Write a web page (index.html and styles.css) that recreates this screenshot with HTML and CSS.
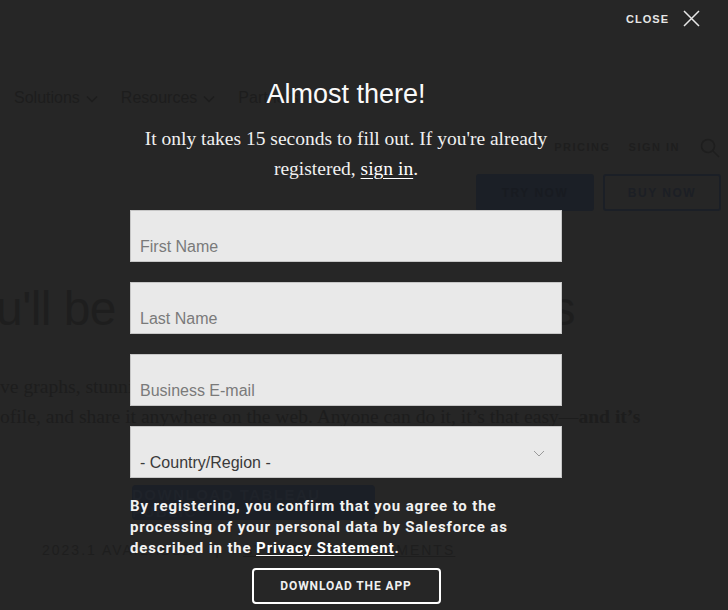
FILE: index.html
```html
<!DOCTYPE html>
<html lang="en">
<head>
<meta charset="utf-8">
<title>Almost there!</title>
<link rel="stylesheet" href="styles.css">
</head>
<body>
<div class="page">
  <header class="top">
    <nav class="mainnav">
      <span class="navitem">Solutions <svg class="caret" width="12" height="8" viewBox="0 0 12 8"><path d="M1 1.5l5 5 5-5" fill="none" stroke="currentColor" stroke-width="1.4"/></svg></span>
      <span class="navitem">Resources <svg class="caret" width="12" height="8" viewBox="0 0 12 8"><path d="M1 1.5l5 5 5-5" fill="none" stroke="currentColor" stroke-width="1.4"/></svg></span>
      <span class="navitem">Partners</span>
    </nav>
    <div class="util">
      <span>PRICING</span>
      <span>SIGN IN</span>
      <svg class="search" width="20" height="20" viewBox="0 0 20 20"><circle cx="8" cy="8" r="6.5" fill="none" stroke="currentColor" stroke-width="1.6"/><path d="M13 13l6 6" stroke="currentColor" stroke-width="1.6"/></svg>
    </div>
    <div class="ctas">
      <span class="try">TRY NOW</span>
      <span class="buy">BUY NOW</span>
    </div>
  </header>
  <section class="hero">
    <h1 class="hero-title">You'll be amazed at the results</h1>
    <p class="hero-line l1">ve graphs, stunning maps, and more. Add your Tableau viz to your</p>
    <p class="hero-line l2">ofile, and share it anywhere on the web. Anyone can do it, it’s that easy—<b>and it’s</b></p>
    <span class="hero-btn">DOWNLOAD TABLEAU PUBLIC</span>
    <p class="avail"><span>2023.1 AVAILABLE</span><span class="sep">|</span><u>SYSTEM REQUIREMENTS</u></p>
  </section>
</div>

<div class="overlay">
  <div class="close">CLOSE <svg width="17" height="17" viewBox="0 0 17 17"><path d="M1 1l15 15M16 1L1 16" stroke="#e6e6e6" stroke-width="1.5"/></svg></div>
  <div class="modal">
    <h2 class="title">Almost there!</h2>
    <p class="sub">It only takes 15 seconds to fill out. If you're already registered, <a href="#">sign in</a>.</p>
    <form class="form">
      <div class="field">First Name</div>
      <div class="field">Last Name</div>
      <div class="field">Business E-mail</div>
      <div class="field select">- Country/Region -<svg class="chev" width="12" height="7" viewBox="0 0 12 7"><path d="M1 1l5 5 5-5" fill="none" stroke="#9a9a9a" stroke-width="1"/></svg></div>
    </form>
    <p class="consent">By registering, you confirm that you agree to the processing of your personal data by Salesforce as described in the <a href="#">Privacy Statement</a>.</p>
    <div class="btnrow"><span class="dl">DOWNLOAD THE APP</span></div>
  </div>
</div>
</body>
</html>
```

FILE: styles.css
```css
html, body {
  margin: 0;
  padding: 0;
  background: #262626;
  width: 728px;
  height: 610px;
  overflow: hidden;
}
body {
  position: relative;
  font-family: "Liberation Sans", Arial, sans-serif;
}
.page {
  color: #1c1c1c;
}
.top {
  height: 230px;
}
.mainnav {
  display: flex;
  gap: 23px;
  padding: 89px 0 0 14px;
  font-size: 16px;
  color: #1d1d1d;
}
.navitem {
  display: flex;
  align-items: center;
  gap: 6px;
}
.caret { margin-top: 2px; }
.util {
  display: flex;
  gap: 18px;
  align-items: center;
  justify-content: flex-end;
  padding: 29px 8px 0 0;
  font-size: 11px;
  letter-spacing: 1.5px;
  font-weight: bold;
  color: #1e1e1e;
}
.search { margin-left: 2px; margin-top: 2px; }
.ctas {
  display: flex;
  gap: 9px;
  justify-content: flex-end;
  padding: 16px 7px 0 0;
}
.ctas span {
  width: 118px;
  height: 37px;
  box-sizing: border-box;
  display: flex;
  align-items: center;
  justify-content: center;
  font-size: 12px;
  font-weight: bold;
  letter-spacing: 1.5px;
  border-radius: 3px;
}
.try { background: #1b1f26; color: #181b21; }
.buy { border: 2px solid #1b1f26; color: #1c1f25; }

.hero { padding-top: 51px; }
.hero-title {
  margin: 0 0 0 -57px;
  font-weight: normal;
  font-size: 48px;
  letter-spacing: -0.6px;
  color: #1e1e1e;
  white-space: nowrap;
}
.hero-line {
  margin: 0;
  font-family: "Liberation Serif", "Times New Roman", serif;
  font-size: 19.6px;
  line-height: 30px;
  color: #1d1d1d;
  white-space: nowrap;
}
.l1 { margin-top: 36px; }
.hero-btn {
  display: flex;
  align-items: center;
  justify-content: center;
  width: 243px;
  height: 35px;
  margin: 53px 0 0 132px;
  background: #1b1f26;
  border-radius: 4px;
  color: #1f232a;
  font-size: 15px;
  font-weight: bold;
  letter-spacing: 1.5px;
}
.avail {
  display: flex;
  margin: 22px 0 0 42px;
  font-size: 14px;
  letter-spacing: 2px;
  color: #1e1e1e;
}
.sep { margin: 0 22px; }

.overlay {
  position: absolute;
  inset: 0;
}
.close {
  position: absolute;
  top: 10px;
  right: 28px;
  display: flex;
  align-items: center;
  gap: 14px;
  color: #e6e6e6;
  font-size: 11px;
  font-weight: bold;
  letter-spacing: 1px;
}
.modal {
  width: 432px;
  margin-left: 130px;
  padding-top: 78px;
  color: #fff;
}
.title {
  margin: 0;
  text-align: center;
  font-size: 27px;
  font-weight: normal;
  line-height: 32px;
  color: #fafafa;
}
.sub {
  margin: 14px 0 0;
  text-align: center;
  font-family: "Liberation Serif", "Times New Roman", serif;
  font-size: 19.5px;
  line-height: 30px;
  color: #f0f0f0;
}
.sub a { color: #fff; text-decoration: underline; text-underline-offset: 3px; }
.form {
  margin-top: 26px;
  display: flex;
  flex-direction: column;
  gap: 20px;
}
.field {
  position: relative;
  height: 52px;
  box-sizing: border-box;
  padding: 26px 0 0 9px;
  background: #e9e9e9;
  border: 1px solid #c6c6c6;
  font-size: 16px;
  line-height: 20px;
  color: #7a7a7a;
}
.select { color: #3a3a3a; }
.chev { position: absolute; right: 16px; top: 23px; }
.consent {
  margin: 18px 0 0;
  font-family: Roboto, "Liberation Sans", sans-serif;
  font-weight: bold;
  font-size: 15px;
  letter-spacing: 0.85px;
  line-height: 21px;
  color: #f2f2f2;
}
.consent a { color: #fff; text-decoration: underline; text-underline-offset: 2px; }
.btnrow {
  display: flex;
  justify-content: center;
  margin-top: 9px;
}
.dl {
  display: flex;
  align-items: center;
  justify-content: center;
  width: 189px;
  height: 36px;
  box-sizing: border-box;
  border: 2px solid #fff;
  border-radius: 4px;
  color: #f0f0f0;
  font-family: Roboto, "Liberation Sans", sans-serif;
  font-size: 12px;
  font-weight: bold;
  letter-spacing: 0.9px;
}
```
